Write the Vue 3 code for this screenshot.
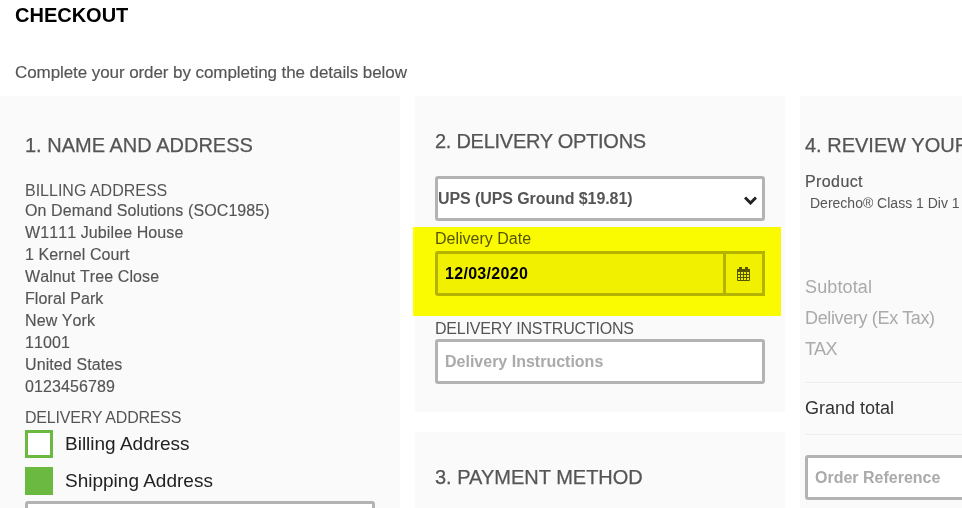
<template>
  <div class="page">
    <h1 class="title">CHECKOUT</h1>
    <p class="intro">Complete your order by completing the details below</p>

    <div class="columns">
      <section class="panel col-address">
        <h2 class="heading">1. NAME AND ADDRESS</h2>
        <div class="address-title">BILLING ADDRESS</div>
        <div v-for="line in billingLines" :key="line" class="address-line">{{ line }}</div>
        <div class="delivery-title">DELIVERY ADDRESS</div>
        <div class="check-row">
          <span class="check"></span>
          <span class="check-label">Billing Address</span>
        </div>
        <div class="check-row">
          <span class="check checked"></span>
          <span class="check-label">Shipping Address</span>
        </div>
        <select class="field address-select"></select>
      </section>

      <div class="col-middle">
        <section class="panel delivery">
          <h2 class="heading delivery-heading">2. DELIVERY OPTIONS</h2>
          <div class="select-wrap">
            <select class="field method">
              <option>UPS (UPS Ground $19.81)</option>
            </select>
            <svg class="chevron" width="13" height="9" viewBox="0 0 13 9">
              <path fill="none" stroke="#222" stroke-width="3" d="M1 1.5l5.5 5.5L12 1.5" />
            </svg>
          </div>
          <div class="date-block">
            <label class="field-label">Delivery Date</label>
            <div class="date-group">
              <input class="date-input" value="12/03/2020" disabled />
              <span class="date-addon">
                <svg width="13" height="14" viewBox="0 0 13 14">
                  <path fill="#555" d="M2 0h3v2h3V0h3v2h2v3H0V2h2z" />
                  <path fill="none" stroke="#555" stroke-width="1" d="M.5 5v8.5h12V5M0 7.5h13M0 10.5h13M3.5 5v9M6.5 5v9M9.5 5v9" />
                </svg>
              </span>
            </div>
            <div class="highlight"></div>
          </div>
          <label class="field-label upper">DELIVERY INSTRUCTIONS</label>
          <input class="field text" placeholder="Delivery Instructions" />
        </section>

        <section class="panel payment">
          <h2 class="heading">3. PAYMENT METHOD</h2>
        </section>
      </div>

      <section class="panel col-review">
        <h2 class="heading">4. REVIEW YOUR ORDER</h2>
        <div class="product-title">Product</div>
        <div class="product-name">Derecho® Class 1 Div 1</div>
        <div class="totals">
          <div class="total-row subtotal">Subtotal</div>
          <div class="total-row delivery-cost">Delivery (Ex Tax)</div>
          <div class="total-row tax">TAX</div>
        </div>
        <div class="grand-total">Grand total</div>
        <input class="field text reference" placeholder="Order Reference" />
      </section>
    </div>
  </div>
</template>

<script setup>
const billingLines = [
  "On Demand Solutions (SOC1985)",
  "W1111 Jubilee House",
  "1 Kernel Court",
  "Walnut Tree Close",
  "Floral Park",
  "New York",
  "11001",
  "United States",
  "0123456789",
];
</script>

<style>
html,
body {
  margin: 0;
  overflow: hidden;
  background: #fff;
}
</style>

<style scoped>
.page {
  width: 962px;
  height: 508px;
  overflow: hidden;
  font-family: "Liberation Sans", Arial, sans-serif;
  font-size: 16px;
  color: #555;
}

.title {
  margin: 0;
  padding: 3px 0 0 15px;
  font-size: 20px;
  line-height: 24px;
  font-weight: bold;
  color: #000;
}

.intro {
  margin: 0;
  padding: 37px 0 0 15px;
  font-size: 17px;
  letter-spacing: -0.08px;
  line-height: 18px;
  height: 32px;
  -webkit-text-stroke: 0.15px #555;
}

.columns {
  display: flex;
  gap: 15px;
  align-items: flex-start;
  width: 1300px;
}

.panel {
  background: #fafafa;
  box-sizing: border-box;
}

.heading {
  margin: 0;
  font-size: 20px;
  line-height: 24px;
  font-weight: normal;
  color: #555;
  -webkit-text-stroke: 0.25px #555;
}

.delivery-heading {
  letter-spacing: -0.27px;
}

/* 地址 */
.col-address {
  width: 400px;
  height: 420px;
  padding: 37px 25px 0;
}

.address-title {
  margin-top: 24px;
  line-height: 19px;
}

.address-line {
  line-height: 22px;
  font-kerning: none;
  letter-spacing: 0.1px;
  -webkit-text-stroke: 0.15px #555;
}

.delivery-title {
  margin-top: 9px;
  line-height: 22px;
  letter-spacing: -0.2px;
}

.check-row {
  display: flex;
  align-items: center;
  gap: 12px;
  margin-bottom: 9px;
  margin-top: 1px;
}

.check-row + .check-row {
  margin-top: 0;
}

.check {
  width: 28px;
  height: 28px;
  box-sizing: border-box;
  border: 3px solid #6cb941;
  background: #fff;
}

.check.checked {
  background: #6cb941;
}

.check-label {
  font-size: 19px;
  color: #222;
}

.address-select {
  width: 350px;
  margin-top: -3px;
}

/* 配送 */
.col-middle {
  width: 370px;
  display: flex;
  flex-direction: column;
  gap: 20px;
}

.delivery {
  height: 316px;
  padding: 33px 20px 0;
}

.payment {
  height: 100px;
  padding: 33px 20px 0;
}

.field {
  display: block;
  box-sizing: border-box;
  height: 45px;
  border: 3px solid #b3b3b3;
  border-radius: 3px;
  background: #fff;
  font-family: inherit;
  font-size: 16px;
  font-weight: bold;
  color: #555;
  outline: none;
}

.select-wrap {
  position: relative;
  margin-top: 23px;
}

.method {
  width: 330px;
  padding: 0;
  appearance: none;
  letter-spacing: -0.09px;
}

.chevron {
  position: absolute;
  left: 309px;
  top: 20px;
  pointer-events: none;
}

.date-block {
  position: relative;
  margin-top: 8px;
}

.field-label {
  display: block;
  line-height: 20px;
  height: 22px;
}

.date-group {
  display: flex;
  width: 330px;
  height: 45px;
  box-sizing: border-box;
  border: 3px solid #b3b3b3;
  border-radius: 3px 0 0 3px;
  background: #f0f0f0;
}

.date-input {
  flex: 1;
  min-width: 0;
  box-sizing: border-box;
  border: 0;
  padding: 0 0 0 7px;
  background: transparent;
  font-family: inherit;
  font-size: 16px;
  font-weight: bold;
  letter-spacing: 0.3px;
  color: #000;
  opacity: 1;
  -webkit-text-fill-color: #000;
  outline: none;
}

.date-addon {
  width: 36px;
  padding-right: 0;
  border-left: 3px solid #b3b3b3;
  display: flex;
  align-items: center;
  justify-content: center;
}

.date-addon svg {
  margin-right: 1px;
}

.highlight {
  position: absolute;
  left: -22px;
  top: -2px;
  width: 368px;
  height: 89px;
  background: #ffff00;
  mix-blend-mode: multiply;
  pointer-events: none;
}

.upper {
  margin-top: 23px;
  height: 20px;
  letter-spacing: -0.2px;
}

.text {
  width: 330px;
  padding: 0 7px;
}

.text::placeholder {
  color: #aaa;
  opacity: 1;
}

/* 订单 */
.col-review {
  width: 500px;
  height: 420px;
  padding: 37px 5px 0;
}

.product-title {
  margin-top: 15px;
  line-height: 20px;
  letter-spacing: 0.4px;
  -webkit-text-stroke: 0.2px #555;
}

.product-name {
  margin-top: 2px;
  padding-left: 5px;
  font-size: 14px;
  line-height: 18px;
}

.totals {
  margin-top: 60px;
}

.total-row {
  height: 31px;
  line-height: 31px;
  font-size: 18px;
  color: #aaa;
}

.subtotal {
  letter-spacing: 0.12px;
}

.delivery-cost {
  letter-spacing: -0.35px;
}

.tax {
  letter-spacing: -0.6px;
}

.grand-total {
  margin-top: 17px;
  padding: 10px 0 11px;
  height: 30px;
  line-height: 30px;
  font-size: 18px;
  color: #333;
  border-top: 1px solid #eee;
  border-bottom: 1px solid #eee;
}

.reference {
  margin-top: 20px;
  width: 330px;
}
</style>
